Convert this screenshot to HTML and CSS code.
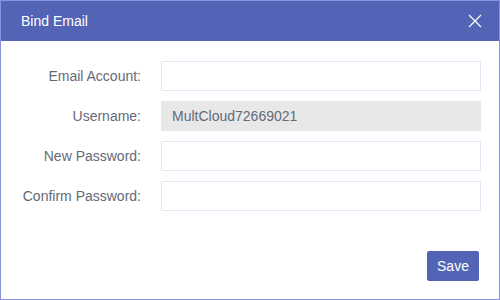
FILE: index.html
```html
<!DOCTYPE html>
<html lang="en">
<head>
    <meta charset="UTF-8">
    <title>Bind Email</title>
    <link rel="stylesheet" href="styles.css">
</head>
<body>
    <div class="dialog">
        <div class="dialog-header">
            <span class="dialog-title">Bind Email</span>
            <button class="close-btn" aria-label="Close">
                <svg width="14" height="14" viewBox="0 0 14 14">
                    <path d="M1 1L13 13M13 1L1 13" stroke="#fff" stroke-width="1.2" fill="none"/>
                </svg>
            </button>
        </div>

        <form class="dialog-body">
            <label class="field-label">Email Account:</label>
            <input class="field-input" type="text">

            <label class="field-label">Username:</label>
            <input class="field-input readonly" type="text" value="MultCloud72669021" readonly>

            <label class="field-label">New Password:</label>
            <input class="field-input" type="password">

            <label class="field-label">Confirm Password:</label>
            <input class="field-input" type="password">
        </form>

        <div class="dialog-footer">
            <button class="save-btn">Save</button>
        </div>
    </div>
</body>
</html>
```

FILE: styles.css
```css
:root {
    --primary: #5363b5;
    --border: #8b92dc;
    --input-border: #dfe6f6;
    --text: #646a78;
}

* {
    margin: 0;
    padding: 0;
    box-sizing: border-box;
}

body {
    font-family: 'Liberation Sans', Arial, sans-serif;
    font-size: 14px;
    background: #fff;
}

.dialog {
    width: 500px;
    height: 300px;
    border: 1px solid var(--border);
    display: flex;
    flex-direction: column;
}

.dialog-header {
    height: 40px;
    background: var(--primary);
    display: flex;
    align-items: center;
    justify-content: space-between;
    padding: 0 17px 0 20px;
}

.dialog-title {
    color: #fff;
    font-size: 14px;
}

.close-btn {
    background: none;
    border: none;
    display: flex;
    cursor: pointer;
}

.dialog-body {
    display: grid;
    grid-template-columns: 140px 1fr;
    column-gap: 20px;
    row-gap: 10px;
    padding: 20px 18px 0 0;
    align-items: center;
}

.field-label {
    text-align: right;
    color: var(--text);
}

.field-input {
    height: 30px;
    border: 1px solid var(--input-border);
    padding: 0 10px;
    font-family: inherit;
    font-size: 14px;
    color: var(--text);
    outline: none;
}

.field-input.readonly {
    background: #e8e8e8;
    border-color: #e8e8e8;
}

.dialog-footer {
    display: flex;
    justify-content: flex-end;
    padding: 40px 20px 0 0;
}

.save-btn {
    width: 52px;
    height: 30px;
    background: var(--primary);
    color: #fff;
    border: none;
    border-radius: 2px;
    font-family: inherit;
    font-size: 14px;
    cursor: pointer;
}
```
